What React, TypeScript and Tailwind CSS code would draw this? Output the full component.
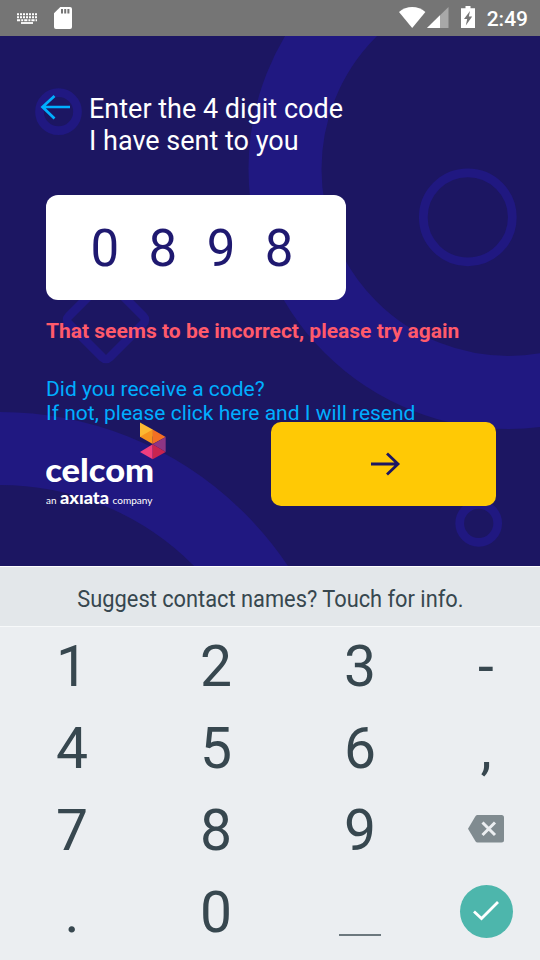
import React from 'react';

function StatusBar() {
  return (
    <header className="flex h-9 items-center bg-[#757575] pl-[17px] pr-3 text-white">
      <svg width="20" height="12" viewBox="0 0 20 12" className="mt-px" fill="none" stroke="currentColor">
        <path d="M0 1.200H20M0 4.200H20" strokeWidth="2" strokeDasharray="2 1" />
        <path d="M0 7.200H20" strokeWidth="2" strokeDasharray="3.200 1 2 1" />
        <path d="M4 10H16" strokeWidth="1.800" />
      </svg>
      <svg width="18" height="22" viewBox="0 0 18 22" className="ml-[17px]">
        <path d="M6.300 0H16a2 2 0 0 1 2 2V20a2 2 0 0 1-2 2H2a2 2 0 0 1-2-2V6.300Z" fill="#fff" />
        <path d="M7 2h2v4.600H7zM10.200 2h2v4.600h-2zM13.400 2h2v4.600h-2z" fill="#757575" />
      </svg>
      <div className="ml-auto flex items-center">
        <svg width="27" height="21" viewBox="0 0 27 21" className="-mt-0.5">
          <path d="M0 5C3.800 1.800 8.300 0 13.200 0S22.600 1.800 26.400 5L13.200 21Z" fill="#fff" />
        </svg>
        <svg width="22" height="21" viewBox="0 0 22 21" className="-mt-0.5 ml-px">
          <path d="M0 21 21.500 0V21Z" fill="#a8a8a8" />
          <path d="M0 21 13 8.300V21Z" fill="#fff" />
        </svg>
        <svg width="14" height="22" viewBox="0 0 14 22" className="-mt-[3px] ml-[12px]">
          <path d="M4.500 0h5v2.200H14V22H0V2.200h4.500Z" fill="#fff" />
          <path d="M9 5 3 13h3.200l-1.400 6.500L11.200 10.400H7.800Z" fill="#757575" />
        </svg>
        <span className="ml-3 mt-px text-[21px] font-medium leading-6">2:49</span>
      </div>
    </header>
  );
}

function Backdrop() {
  return (
    <svg
      className="absolute inset-0"
      width="540"
      height="530"
      viewBox="0 36 540 530"
      fill="none"
      stroke="#201881"
      aria-hidden="true"
    >
      <circle cx="508.500" cy="169" r="223.500" strokeWidth="73" />
      <circle cx="0" cy="758" r="309.500" strokeWidth="73" />
      <circle cx="467.800" cy="217.300" r="44.500" strokeWidth="8.700" />
      <circle cx="58.500" cy="111.700" r="19" strokeWidth="8.700" />
      <circle cx="478.700" cy="523.300" r="19" strokeWidth="8.700" />
      <rect x="77" y="291" width="58" height="58" rx="5" strokeWidth="8.700" transform="rotate(45 106 320)" />
    </svg>
  );
}

function CelcomLogo() {
  return (
    <svg width="122" height="88" viewBox="0 0 122 88" className="shrink-0">
      <path d="M94 .5 106.700 7.500V14.500L94 15Z" fill="#fdb932" />
      <path d="M106.700 7.500V22L94 14.700Z" fill="#f7941e" />
      <path d="M106.700 7.500 119.700 15 106.700 22Z" fill="#f36f24" />
      <path d="M119.700 15V30L106.700 22.300Z" fill="#8e3584" />
      <path d="M106.700 22.300 94 30 106.700 37.300Z" fill="#ef3e7f" />
      <path d="M106.700 22.300 119.700 30 106.700 37.300Z" fill="#c9244f" />
      <g fill="#fff" fontFamily="Lato, sans-serif">
        <text x="-.8" y="59.500" fontSize="33" fontWeight="900" textLength="109" lengthAdjust="spacingAndGlyphs">celcom</text>
        <text x="0" y="82" fontSize="10" textLength="10.500" lengthAdjust="spacingAndGlyphs">an</text>
        <text x="14" y="82" fontSize="17.500" fontWeight="900" textLength="49" lengthAdjust="spacingAndGlyphs">axıata</text>
        <text x="66.500" y="82" fontSize="10" textLength="40" lengthAdjust="spacingAndGlyphs">company</text>
      </g>
    </svg>
  );
}

function CodeScreen() {
  return (
    <main className="relative h-[530px] overflow-hidden bg-[#1c1662]">
      <Backdrop />
      <div className="relative flex flex-col pt-[57px]">
        <div className="flex items-start pl-10">
          <button aria-label="Back" className="mt-0.5">
            <svg width="31" height="26" viewBox="0 0 31 26" fill="none" stroke="#00aeff" strokeWidth="2.700">
              <path d="M14.500 1 2.500 12 14.500 23.500M2 12H30" />
            </svg>
          </button>
          <h1 className="ml-[18px] text-[27px] leading-8 text-white">
            Enter the 4 digit code
            <br />I have sent to you
          </h1>
        </div>
        <div className="ml-[46px] mt-[38px] flex h-[105px] w-[300px] items-center rounded-[12px] bg-white pl-[44.500px] pt-[4px] text-[51px] tracking-[29.400px] text-[#1f1970]">
          0898
        </div>
        <p className="ml-[46px] mt-[19px] whitespace-nowrap text-[21px] font-bold leading-6 text-[#ff5a6b]">
          That seems to be incorrect, please try again
        </p>
        <p className="ml-[46px] mt-[34px] whitespace-nowrap text-[21px] leading-6 text-[#00aeff]">
          Did you receive a code?
          <br />
          If not, please click here and I will resend
        </p>
        <div className="-mt-[3px] flex items-start justify-between pl-[46px] pr-11">
          <CelcomLogo />
          <button aria-label="Continue" className="flex h-[84px] w-[225px] items-center justify-center rounded-[10px] bg-[#ffc905]">
            <svg width="30" height="24" viewBox="0 0 30 24" className="ml-1" fill="none" stroke="#1c1662" strokeWidth="2.800">
              <path d="M0 12H27M16 1.500 27 12 16 22.500" />
            </svg>
          </button>
        </div>
      </div>
    </main>
  );
}

const KEY_ROWS = [
  ['1', '2', '3', '-'],
  ['4', '5', '6', ','],
  ['7', '8', '9', 'delete'],
  ['.', '0', 'space', 'done'],
];

function Key({ name }: { name: string }) {
  if (name === 'delete') {
    return (
      <svg width="36" height="28" viewBox="0 0 36 28">
        <path d="M9.500 0H33.500A2.500 2.500 0 0 1 36 2.500V25A2.500 2.500 0 0 1 33.500 27.500H9.500Q8.300 27.500 7.600 26.500L0 13.700 7.600 1Q8.300 0 9.500 0Z" fill="#808b90" />
        <path d="M14.500 7.500 27 20M27 7.500 14.500 20" stroke="#ebeef1" strokeWidth="3" />
      </svg>
    );
  }
  if (name === 'done') {
    return (
      <span className="flex size-[53px] items-center justify-center rounded-full bg-[#4db6ac]">
        <svg width="28" height="22" viewBox="0 0 28 22" fill="none" stroke="#fff" strokeWidth="2.800">
          <path d="M2 11.500 9.500 18.500 26 2" />
        </svg>
      </span>
    );
  }
  if (name === 'space') {
    return <span className="mt-[47px] h-[2px] w-[42px] bg-[#6c787e]" />;
  }
  return <span className="mt-0.5">{name}</span>;
}

function Keyboard() {
  return (
    <section className="h-[394px] bg-[#ebeef1] text-[#37474f]">
      <div className="flex h-[60px] items-center justify-center border-t border-white bg-[#e3e7ea] pt-1">
        <p className="origin-center scale-x-[0.909] whitespace-nowrap text-2xl">
          Suggest contact names? Touch for info.
        </p>
      </div>
      <div className="border-t border-[#f7f9fa]">
        {KEY_ROWS.map((row) => (
          <div key={row[0]} className="grid h-[82px] grid-cols-[144px_144px_144px_108px] text-[57px] leading-none">
            {row.map((name) => (
              <button key={name} aria-label={name} className="flex h-[76px] items-center justify-center">
                <Key name={name} />
              </button>
            ))}
          </div>
        ))}
      </div>
    </section>
  );
}

export default function App() {
  return (
    <div className="h-[960px] w-[540px] overflow-hidden font-[Roboto,sans-serif]">
      <StatusBar />
      <CodeScreen />
      <Keyboard />
    </div>
  );
}
